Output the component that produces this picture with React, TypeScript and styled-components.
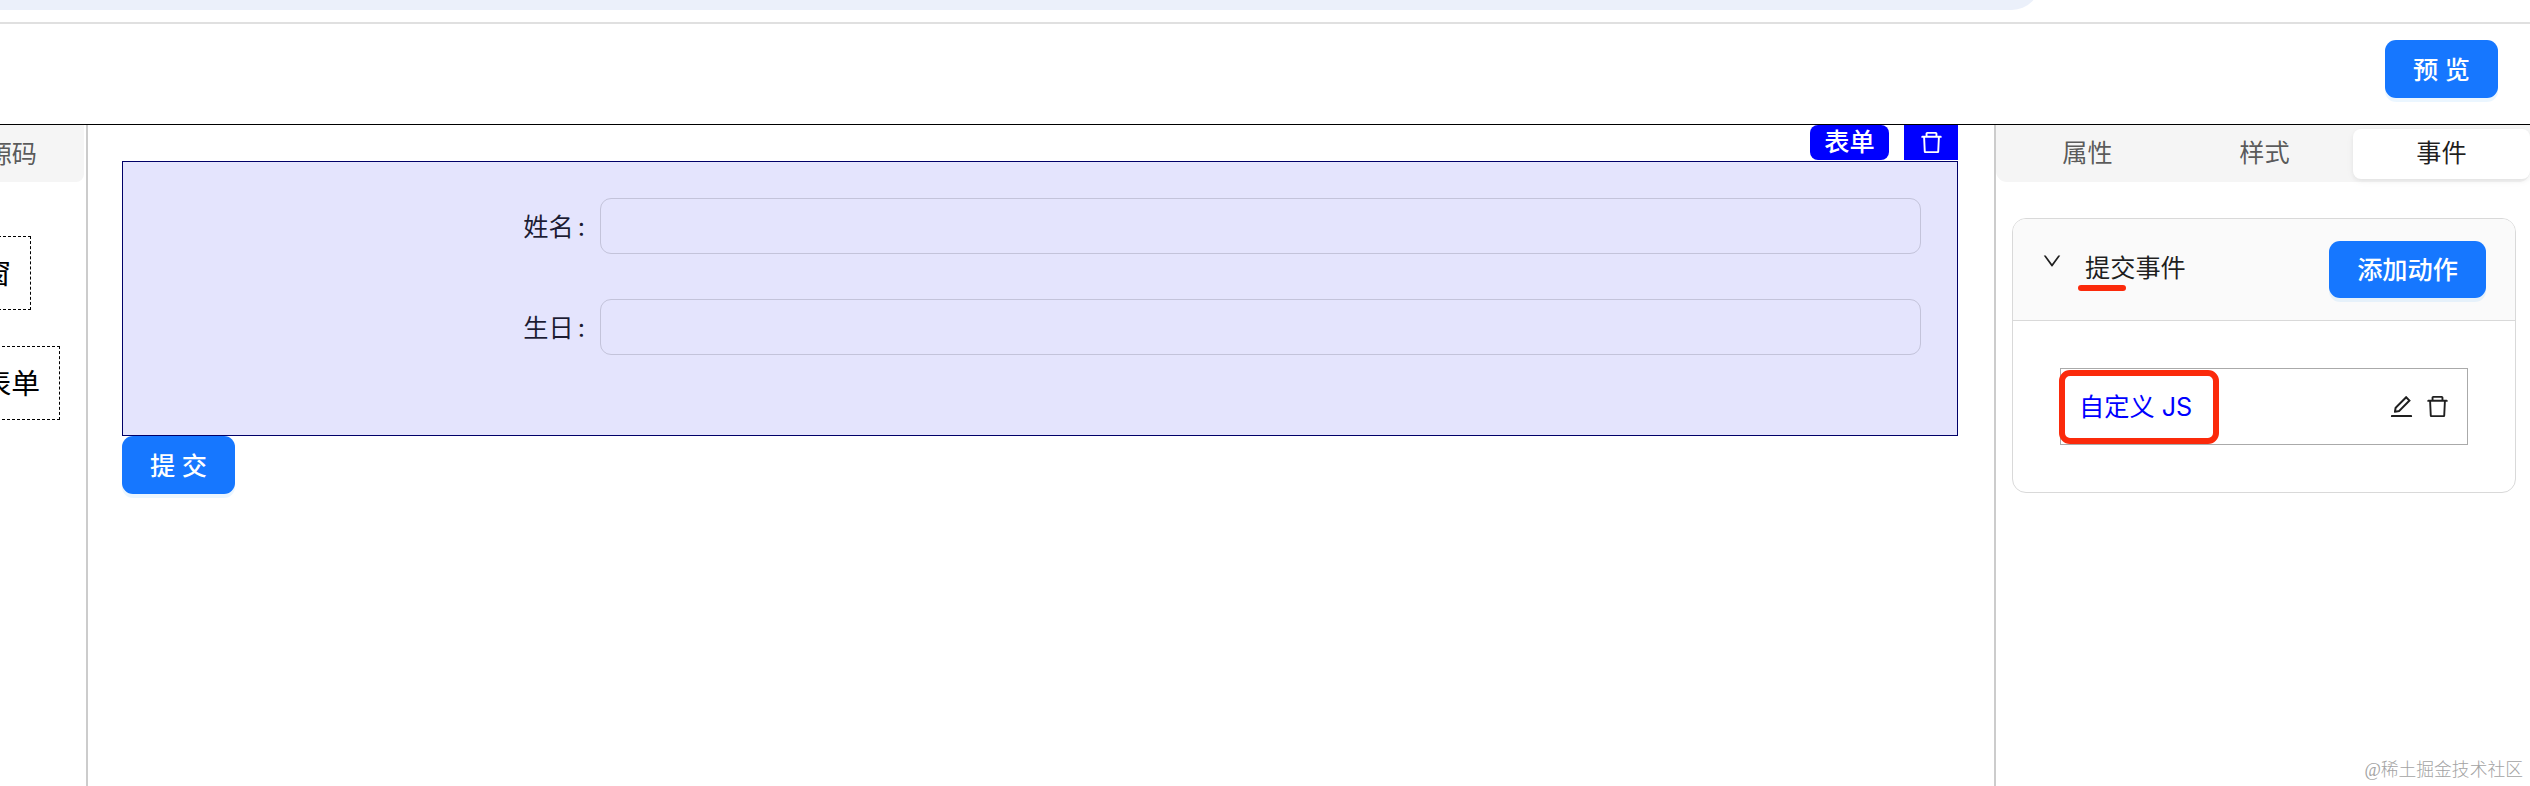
import React from "react";
import styled, { createGlobalStyle, css } from "styled-components";
import { AiOutlineDelete, AiOutlineDown, AiOutlineEdit } from "react-icons/ai";

const GlobalStyle = createGlobalStyle`
  *, *::before, *::after { box-sizing: border-box; }
  body {
    margin: 0;
    background: #fff;
    color: rgba(0, 0, 0, 0.88);
    font-family: Inter, "Noto Sans CJK SC", sans-serif;
    font-size: 25.2px;
    line-height: 40px;
  }
  svg { display: block; }
`;

const Page = styled.div`
  position: relative;
  display: flex;
  flex-direction: column;
  width: 2530px;
  height: 786px;
  overflow: hidden;
`;

const BrowserBar = styled.div`
  flex: none;
  height: 24px;
  border-bottom: 2px solid #e0e0e0;
  overflow: hidden;
`;

const AddressPill = styled.div`
  width: 2040px;
  height: 40px;
  margin-top: -30px;
  border-radius: 0 0 28px 0;
  background: #ebf0fa;
`;

const Header = styled.header`
  flex: none;
  display: flex;
  justify-content: flex-end;
  align-items: flex-start;
  height: 101px;
  padding: 16px 32px 0 0;
  border-bottom: 1px solid #000;
`;

const PrimaryButton = styled.button<{ $width: number; $height?: number }>`
  display: flex;
  align-items: center;
  justify-content: center;
  flex: none;
  width: ${(p) => p.$width}px;
  height: ${(p) => p.$height ?? 58}px;
  padding: 1px 0 0;
  border: 0;
  border-radius: 11px;
  background: #1677ff;
  box-shadow: 0 4px 0 rgba(5, 145, 255, 0.08);
  color: #fff;
  font: inherit;
  font-weight: 500;
`;

const Body = styled.div`
  flex: 1;
  display: flex;
  min-height: 0;
`;

const Sidebar = styled.aside`
  flex: none;
  display: flex;
  flex-direction: column;
  align-items: flex-end;
  width: 88px;
  border-right: 2px solid #ccc;
  overflow: hidden;
`;

const SidebarTab = styled.div`
  display: flex;
  align-items: center;
  justify-content: flex-end;
  width: 220px;
  height: 57px;
  margin: 0 2px 54px 0;
  padding: 1px 47px 0 0;
  border-radius: 0 0 8px 0;
  background: #f5f5f5;
  color: rgba(0, 0, 0, 0.65);
`;

const Material = styled.div<{ $offset: number }>`
  display: flex;
  align-items: center;
  flex: none;
  height: 74px;
  margin: 0 ${(p) => p.$offset}px 36px 0;
  padding: 2px 19px 0;
  border: 1px dashed #000;
  color: #000;
  font-size: 28.8px;
  white-space: nowrap;
`;

const Canvas = styled.main`
  flex: 1;
  min-width: 0;
  padding: 36px 36px 0 34px;
`;

const FormBlock = styled.section`
  position: relative;
  display: flex;
  flex-direction: column;
  gap: 45px;
  height: 275px;
  padding: 36px 36px 0 0;
  border: 1px solid #000068;
  background: #e4e4fd;
`;

const BlockTools = styled.div`
  position: absolute;
  right: -1px;
  bottom: 100%;
  display: flex;
  gap: 15px;
  height: 35px;
  margin-bottom: 2px;
  color: #fff;
`;

const BlockName = styled.span`
  width: 79px;
  height: 35px;
  border-radius: 8px;
  background: #00f;
  line-height: 35px;
  text-align: center;
  font-weight: 500;
`;

const BlockDelete = styled.span`
  display: flex;
  align-items: center;
  justify-content: center;
  width: 54px;
  height: 35px;
  background: #00f;
`;

const Field = styled.label`
  display: flex;
  align-items: center;
  height: 56px;
  color: rgba(0, 0, 20, 0.88);
`;

const FieldLabel = styled.span`
  flex: none;
  display: flex;
  justify-content: flex-end;
  width: 477px;
  padding: 1px 15px 0 0;
`;

const Colon = styled.span`
  margin-left: 4px;
`;

const TextInput = styled.input`
  flex: 1;
  min-width: 0;
  height: 56px;
  padding: 0 20px;
  border: 1px solid #c3c3da;
  border-radius: 11px;
  background: transparent;
  font: inherit;
`;

const Settings = styled.aside`
  flex: none;
  width: 536px;
  border-left: 2px solid #ccc;
`;

const Tabs = styled.nav`
  display: flex;
  height: 57px;
  padding: 4px 0 3px 3px;
  border-radius: 0 0 11px 11px;
  background: #f5f5f5;
`;

const Tab = styled.div<{ $active?: boolean }>`
  flex: none;
  width: 177px;
  height: 50px;
  border-radius: 8px;
  color: rgba(0, 0, 0, 0.65);
  line-height: 49px;
  text-align: center;
  ${(p) =>
    p.$active &&
    css`
      background: #fff;
      color: rgba(0, 0, 0, 0.88);
      box-shadow: 0 2px 4px rgba(0, 0, 0, 0.05), 0 2px 11px -2px rgba(0, 0, 0, 0.06);
    `}
`;

const Collapse = styled.section`
  height: 275px;
  margin: 36px 14px 0 16px;
  border: 1px solid #d9d9d9;
  border-radius: 14px;
  overflow: hidden;
`;

const CollapseHeader = styled.div`
  display: flex;
  align-items: flex-start;
  height: 102px;
  padding: 22px 29px 0 28px;
  border-bottom: 1px solid #d9d9d9;
  background: #fafafa;
`;

const Arrow = styled.span`
  margin-top: 9px;
`;

const EventTitle = styled.span`
  position: relative;
  flex: 1;
  margin: 7px 0 0 22px;
`;

const Underline = styled.span`
  position: absolute;
  left: -7px;
  top: 37px;
  width: 48px;
  height: 6px;
  border-radius: 3px;
  background: #fb2a0b;
`;

const CollapseBody = styled.div`
  padding: 47px;
`;

const ActionItem = styled.div`
  position: relative;
  display: flex;
  align-items: center;
  height: 77px;
  padding: 0 16px 0 18px;
  border: 1px solid #aaa;
`;

const ActionName = styled.span`
  flex: 1;
  color: #00f;
`;

const Marker = styled.span`
  position: absolute;
  left: -2px;
  top: 1px;
  width: 160px;
  height: 74px;
  border: 6px solid #fb2a0b;
  border-radius: 11px;
`;

const ActionIcons = styled.span`
  display: flex;
  gap: 9px;
`;

const Watermark = styled.div`
  position: absolute;
  right: 7px;
  bottom: 4px;
  color: #a3a3a3;
  font-family: "Liberation Serif", "Noto Sans CJK SC", serif;
  font-size: 17.8px;
  font-weight: 300;
  line-height: 24px;
`;

const tabs = ["属性", "样式", "事件"];
const fields = ["姓名", "生日"];

export default function App() {
  return (
    <Page>
      <GlobalStyle />
      <BrowserBar>
        <AddressPill />
      </BrowserBar>
      <Header>
        <PrimaryButton $width={113}>预 览</PrimaryButton>
      </Header>
      <Body>
        <Sidebar>
          <SidebarTab>源码</SidebarTab>
          <Material $offset={55}>弹窗</Material>
          <Material $offset={26}>表单</Material>
        </Sidebar>
        <Canvas>
          <FormBlock>
            <BlockTools>
              <BlockName>表单</BlockName>
              <BlockDelete>
                <AiOutlineDelete size={27} />
              </BlockDelete>
            </BlockTools>
            {fields.map((name) => (
              <Field key={name}>
                <FieldLabel>
                  {name}
                  <Colon>:</Colon>
                </FieldLabel>
                <TextInput />
              </Field>
            ))}
          </FormBlock>
          <PrimaryButton $width={113}>提 交</PrimaryButton>
        </Canvas>
        <Settings>
          <Tabs>
            {tabs.map((tab) => (
              <Tab key={tab} $active={tab === "事件"}>{tab}</Tab>
            ))}
          </Tabs>
          <Collapse>
            <CollapseHeader>
              <Arrow>
                <AiOutlineDown size={22} />
              </Arrow>
              <EventTitle>
                提交事件
                <Underline />
              </EventTitle>
              <PrimaryButton $width={157} $height={57}>添加动作</PrimaryButton>
            </CollapseHeader>
            <CollapseBody>
              <ActionItem>
                <ActionName>自定义 JS</ActionName>
                <ActionIcons>
                  <AiOutlineEdit size={27} />
                  <AiOutlineDelete size={27} />
                </ActionIcons>
                <Marker />
              </ActionItem>
            </CollapseBody>
          </Collapse>
        </Settings>
      </Body>
      <Watermark>@稀土掘金技术社区</Watermark>
    </Page>
  );
}
